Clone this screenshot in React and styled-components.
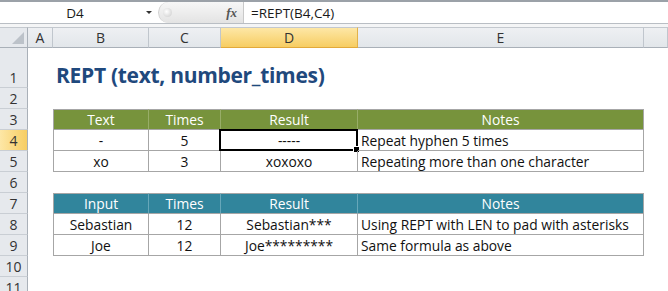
import React from 'react'
import styled, { createGlobalStyle } from 'styled-components'

const GlobalStyle = createGlobalStyle`
    html, body {
        margin: 0;
        padding: 0;
        background: #ffffff;
    }
    body {
        font-family: 'Open Sans', 'Noto Sans', sans-serif;
    }
`

const Window = styled.div`
    width: 668px;
    height: 291px;
    overflow: hidden;
    background: #ffffff;
    display: flex;
    flex-direction: column;
`

const FormulaBar = styled.div`
    flex-shrink: 0;
    display: flex;
    align-items: stretch;
    height: 21px;
    border-top: 2px solid #9ba1a8;
    border-bottom: 1px solid #b9bec4;
    background: #ffffff;
    font-size: 13.5px;
    color: #1a1a1a;
`

const NameBox = styled.div`
    width: 158px;
    display: flex;
    align-items: center;
`

const NameText = styled.span`
    flex: 1;
    text-align: center;
    padding-left: 4px;
`

const DropArrow = styled.span`
    width: 0;
    height: 0;
    margin-right: 6px;
    border-left: 3px solid transparent;
    border-right: 3px solid transparent;
    border-top: 3px solid #333;
`

const Grip = styled.div`
    width: 85px;
    display: flex;
    align-items: center;
    justify-content: space-between;
    padding: 0 6px 0 4px;
    box-sizing: border-box;
    background: linear-gradient(#f7f7f7, #e3e3e3);
    border-radius: 11px 0 0 11px;
    border-left: 1px solid #d0d0d0;
`

const GripDot = styled.span`
    width: 9px;
    height: 9px;
    border-radius: 50%;
    background: radial-gradient(circle at 40% 40%, #ffffff, #c9c9c9);
`

const Fx = styled.span`
    font-family: 'Liberation Serif', 'DejaVu Serif', serif;
    font-style: italic;
    font-weight: bold;
    font-size: 13px;
    color: #555;
`

const FormulaInput = styled.div`
    flex: 1;
    display: flex;
    align-items: center;
    padding-left: 7px;
    border-left: 1px solid #c9c9c9;
`

const Gap = styled.div`
    flex-shrink: 0;
    height: 3px;
    background: #f4f5f6;
`

const Sheet = styled.div`
    flex-shrink: 0;
    display: grid;
    grid-template-columns: 28px 25px 96px 72px 137px 286px 1fr;
    grid-template-rows: 21px 40px repeat(10, 21px);
    font-size: 13.8px;
    color: #111;
`

const Corner = styled.div`
    position: relative;
    background: #e6e9ed;
    border-right: 1px solid #a9b0b8;
    border-bottom: 1px solid #a9b0b8;
    border-top: 1px solid #c3c8ce;
    &::after {
        content: '';
        position: absolute;
        right: 3px;
        bottom: 3px;
        border-left: 12px solid transparent;
        border-bottom: 12px solid #bcc2c9;
    }
`

const ColHead = styled.div`
    display: flex;
    align-items: center;
    justify-content: center;
    font-size: 14px;
    color: #333;
    border-top: 1px solid #c3c8ce;
    border-right: 1px solid #c0c6cd;
    border-bottom: 1px solid #a9b0b8;
    background: ${p => p.$active
        ? 'linear-gradient(#fde7a6, #f7cd62)'
        : 'linear-gradient(#eef0f3, #e2e6ea)'};
    ${p => p.$active && 'border-right-color: #e2b24a; border-bottom-color: #e2a93a;'}
`

const RowHead = styled.div`
    display: flex;
    align-items: flex-end;
    justify-content: center;
    box-sizing: border-box;
    font-size: 14px;
    color: #333;
    border-right: 1px solid #a9b0b8;
    border-bottom: 1px solid #c9ced4;
    background: ${p => p.$active
        ? 'linear-gradient(90deg, #fde7a6, #f7cd62)'
        : '#e6e9ed'};
`

const Cell = styled.div`
    position: relative;
    display: flex;
    align-items: center;
    justify-content: ${p => p.$left ? 'flex-start' : 'center'};
    padding-left: ${p => p.$left ? '3px' : '0'};
    white-space: nowrap;
    box-sizing: border-box;
    ${p => p.$table && `
        border-right: 1px solid #a6a6a6;
        border-bottom: 1px solid #a6a6a6;
    `}
    ${p => p.$first && 'border-left: 1px solid #a6a6a6;'}
    ${p => p.$tone && `
        background: ${p.$tone};
        color: #ffffff;
        border-top: 1px solid #a6a6a6;
        justify-content: center;
        padding-left: 0;
    `}
    ${p => p.$tone && !p.$last && `border-right-color: ${p.$sep};`}
`

const Title = styled.div`
    grid-column: 3 / span 5;
    display: flex;
    align-items: flex-end;
    padding: 0 0 0 3px;
    font-size: 21px;
    line-height: 26px;
    font-weight: 700;
    letter-spacing: -0.3px;
    color: #1f497d;
    white-space: nowrap;
`

const Selection = styled.div`
    position: absolute;
    top: -1px;
    left: -2px;
    right: -1px;
    bottom: -1px;
    border: 2px solid #000;
    pointer-events: none;
`

const FillHandle = styled.div`
    position: absolute;
    right: -4px;
    bottom: -4px;
    width: 5px;
    height: 5px;
    background: #000;
    border: 1px solid #fff;
`

const cols = ['A', 'B', 'C', 'D', 'E', '']

const tables = [
    {
        start: 3,
        tone: '#77933c',
        sep: '#98ad68',
        head: ['Text', 'Times', 'Result', 'Notes'],
        rows: [
            ['-', '5', '-----', 'Repeat hyphen 5 times'],
            ['xo', '3', 'xoxoxo', 'Repeating more than one character'],
        ],
    },
    {
        start: 7,
        tone: '#31859c',
        sep: '#67a7b9',
        head: ['Input', 'Times', 'Result', 'Notes'],
        rows: [
            ['Sebastian', '12', 'Sebastian***', 'Using REPT with LEN to pad with asterisks'],
            ['Joe', '12', 'Joe*********', 'Same formula as above'],
        ],
    },
]

const tableRow = (r) => {
    for (const t of tables) {
        const i = r - t.start
        if (i === 0) return { t, values: t.head, head: true }
        if (i > 0 && i <= t.rows.length) return { t, values: t.rows[i - 1], head: false }
    }
    return null
}

const SheetRow = ({ r }) => {
    if (r === 1) {
        return (
            <>
                <RowHead>1</RowHead>
                <Cell />
                <Title>REPT (text, number_times)</Title>
            </>
        )
    }
    const tr = tableRow(r)
    return (
        <>
            <RowHead $active={r === 4}>{r}</RowHead>
            {cols.map((c, ci) => {
                const k = ci - 1
                if (!tr || k < 0 || k > 3) return <Cell key={c + ci} />
                return (
                    <Cell
                        key={c + ci}
                        $table
                        $first={k === 0}
                        $last={k === 3}
                        $left={!tr.head && k === 3}
                        $tone={tr.head ? tr.t.tone : null}
                        $sep={tr.t.sep}
                    >
                        {tr.values[k]}
                        {r === 4 && c === 'D' && (
                            <Selection>
                                <FillHandle />
                            </Selection>
                        )}
                    </Cell>
                )
            })}
        </>
    )
}

const App = () => {
    const rows = Array.from({ length: 11 }, (_, i) => i + 1)
    return (
        <Window>
            <GlobalStyle />
            <FormulaBar>
                <NameBox>
                    <NameText>D4</NameText>
                    <DropArrow />
                </NameBox>
                <Grip>
                    <GripDot />
                    <Fx>fx</Fx>
                </Grip>
                <FormulaInput>=REPT(B4,C4)</FormulaInput>
            </FormulaBar>
            <Gap />
            <Sheet>
                <Corner />
                {cols.map((c, i) => (
                    <ColHead key={c + i} $active={c === 'D'}>{c}</ColHead>
                ))}
                {rows.map(r => <SheetRow key={r} r={r} />)}
            </Sheet>
        </Window>
    )
}

export default App
